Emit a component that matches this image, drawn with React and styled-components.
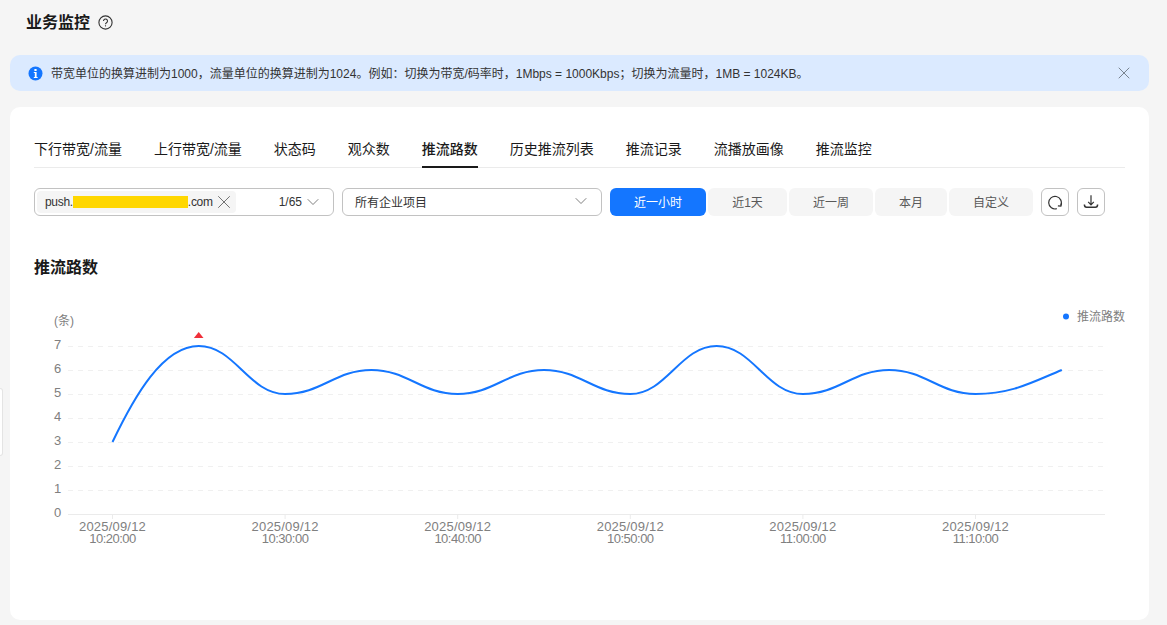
import React from "react";
import styled, { createGlobalStyle } from "styled-components";
import { X, ChevronDown } from "lucide-react";

const GlobalStyle = createGlobalStyle`
  html, body {
    margin: 0;
    padding: 0;
    height: 100%;
    overflow: hidden;
    background: #f5f5f5;
    font-family: "Liberation Sans", "Noto Sans CJK SC", Arial, sans-serif;
    color: #1a1a1a;
  }
  * { box-sizing: border-box; }
`;

const Page = styled.div`
  position: relative;
  height: 625px;
  padding: 0 18px 5px 10px;
  display: flex;
  flex-direction: column;
`;

const Header = styled.div`
  height: 55px;
  padding: 0 0 10px 16px;
  display: flex;
  align-items: center;
  gap: 8px;
`;

const Title = styled.h1`
  margin: 0;
  font-size: 16px;
  line-height: 22px;
  font-weight: 700;
`;

const Alert = styled.div`
  height: 36px;
  flex: none;
  margin-bottom: 16px;
  padding: 0 15px 0 18px;
  display: flex;
  align-items: center;
  gap: 8px;
  background: #dbeaff;
  border-radius: 10px;
  font-size: 12px;
  color: #333;
`;

const AlertText = styled.span`
  flex: 1;
  padding-bottom: 1px;
`;

const CloseButton = styled.span`
  display: flex;
  color: #6f7a85;
`;

const Card = styled.section`
  flex: 1;
  padding: 23px 24px 0;
  background: #fff;
  border-radius: 10px;
`;

const Tabs = styled.nav`
  height: 38px;
  display: flex;
  gap: 32px;
  border-bottom: 1px solid #ebebeb;
`;

const Tab = styled.a`
  height: 38px;
  padding-top: 9px;
  font-size: 14px;
  line-height: 20px;
  font-weight: ${(p) => (p.$active ? 500 : 400)};
  color: #1a1a1a;
  border-bottom: 2px solid ${(p) => (p.$active ? "#1a1a1a" : "transparent")};
`;

const Filters = styled.div`
  margin-top: 20px;
  height: 28px;
  display: flex;
  gap: 8px;
`;

const Select = styled.div`
  width: ${(p) => p.$width}px;
  height: 28px;
  padding: ${(p) => (p.$tagged ? "0 10px 0 2px" : "0 10px 2px 12px")};
  display: flex;
  align-items: center;
  justify-content: space-between;
  border: 1px solid #c2c2c2;
  border-radius: 6px;
  font-size: 12px;
  color: #333;
  svg { color: #666; }
`;

const Tag = styled.span`
  width: 199px;
  height: 22px;
  padding: 0 0 0 8px;
  display: flex;
  align-items: center;
  background: #f5f5f5;
  border-radius: 4px;
  letter-spacing: -0.3px;
`;

const Redacted = styled.span`
  width: 115px;
  height: 12px;
  background: #ffd700;
`;

const TagClose = styled.span`
  display: flex;
`;

const Count = styled.span`
  margin-left: auto;
  margin-right: 1px;
`;

const Ranges = styled.div`
  display: flex;
  gap: 2px;
`;

const Range = styled.button`
  width: ${(p) => p.$width}px;
  height: 28px;
  padding: 0 0 2px;
  border: 0;
  border-radius: 6px;
  font: inherit;
  font-size: 12px;
  color: ${(p) => (p.$active ? "#fff" : "#595959")};
  background: ${(p) => (p.$active ? "#1476ff" : "#f5f5f5")};
`;

const IconButtons = styled.div`
  display: flex;
  gap: 8px;
`;

const IconButton = styled.button`
  width: 28px;
  height: 28px;
  padding: 0;
  display: flex;
  align-items: center;
  justify-content: center;
  background: #fff;
  border: 1px solid #c2c2c2;
  border-radius: 6px;
  color: #333;
`;

const ChartTitle = styled.h2`
  margin: 41px 0 0;
  font-size: 16px;
  line-height: 22px;
  font-weight: 700;
`;

const Chart = styled.svg`
  display: block;
  margin-top: 11px;
  width: 1091px;
  height: 260px;
  text {
    font-family: "Liberation Sans", "Noto Sans CJK SC", Arial, sans-serif;
    fill: #808080;
  }
`;

const SideHandle = styled.div`
  position: absolute;
  left: 0;
  top: 388px;
  width: 3px;
  height: 68px;
  background: #fff;
  border: 1px solid #e4e4e4;
  border-left: 0;
  border-radius: 0 4px 4px 0;
`;

const tabs = [
  "下行带宽/流量",
  "上行带宽/流量",
  "状态码",
  "观众数",
  "推流路数",
  "历史推流列表",
  "推流记录",
  "流播放画像",
  "推流监控",
];

const ranges = [
  { label: "近一小时", width: 96 },
  { label: "近1天", width: 79 },
  { label: "近一周", width: 84 },
  { label: "本月", width: 72 },
  { label: "自定义", width: 84 },
];

const values = [3, 7, 5, 6, 5, 6, 5, 7, 5, 6, 5, 6];
const ticks = ["10:20:00", "10:30:00", "10:40:00", "10:50:00", "11:00:00", "11:10:00"];

const X0 = 112.5;
const STEP = 86.3;
const yOf = (v) => 514 - v * 24;
const xOf = (i) => X0 + i * STEP;

function linePath() {
  let d = `M${X0} ${yOf(values[0])}`;
  for (let i = 1; i < values.length; i++) {
    const x0 = xOf(i - 1);
    const x1 = xOf(i);
    const y0 = yOf(values[i - 1]);
    const y1 = yOf(values[i]);
    const first = i === 1;
    const last = i === values.length - 1;
    const c1x = first ? x0 + STEP * 0.25 : x0 + STEP * 0.42;
    const c1y = first ? y0 - 45 : y0;
    const c2x = last ? x1 - STEP * 0.35 : x1 - STEP * 0.42;
    const c2y = last ? y1 + 12.5 : y1;
    d += ` C${c1x} ${c1y} ${c2x} ${c2y} ${x1} ${y1}`;
  }
  return d;
}

function HelpIcon() {
  return (
    <svg width="15" height="15" viewBox="0 0 15 15" fill="none" stroke="#333" strokeWidth="1.1">
      <circle cx="7.5" cy="7.5" r="6.6" />
      <path d="M5.5 5.9a2 2 0 1 1 3 1.8c-.65.4-1 .75-1 1.5" />
      <path d="M7.5 10.3v1.1" />
    </svg>
  );
}

function InfoIcon() {
  return (
    <svg width="15" height="15" viewBox="0 0 15 15">
      <circle cx="7.5" cy="7.5" r="7" fill="#1476ff" />
      <rect x="6.4" y="3" width="2.2" height="2" fill="#fff" />
      <path d="M5.8 6h2.8v5h1v1H5.8v-1h1V7h-1z" fill="#fff" />
    </svg>
  );
}

function RefreshIcon() {
  return (
    <svg width="16" height="16" viewBox="0 0 16 16" fill="none" stroke="#333" strokeWidth="1.2">
      <path d="M13.7 11.4A6.3 6.3 0 1 0 9.8 14.7" />
      <path d="M10.9 11.8l3 .4.6-3" />
    </svg>
  );
}

function DownloadIcon() {
  return (
    <svg width="16" height="16" viewBox="0 0 16 16" fill="none" stroke="#333" strokeWidth="1.2">
      <path d="M8 1.2v9.4M5.2 7.8L8 10.8l2.8-3" />
      <path d="M1.4 10.4c0 1.9.9 2.8 2.2 2.8h8.8c1.3 0 2.2-.9 2.2-2.8" strokeWidth="1.5" />
    </svg>
  );
}

export default function App() {
  return (
    <Page>
      <GlobalStyle />
      <SideHandle />
      <Header>
        <Title>业务监控</Title>
        <HelpIcon />
      </Header>
      <Alert>
        <InfoIcon />
        <AlertText>
          带宽单位的换算进制为1000，流量单位的换算进制为1024。例如：切换为带宽/码率时，1Mbps = 1000Kbps；切换为流量时，1MB = 1024KB。
        </AlertText>
        <CloseButton>
          <X size={20} strokeWidth={1.1} />
        </CloseButton>
      </Alert>
      <Card>
        <Tabs>
          {tabs.map((t) => (
            <Tab key={t} $active={t === "推流路数"}>
              {t}
            </Tab>
          ))}
        </Tabs>
        <Filters>
          <Select $width={300} $tagged>
            <Tag>
              push.<Redacted />.com
              <TagClose>
                <X size={22} strokeWidth={1} />
              </TagClose>
            </Tag>
            <Count>1/65</Count>
            <ChevronDown size={20} strokeWidth={1} />
          </Select>
          <Select $width={260}>
            所有企业项目
            <ChevronDown size={20} strokeWidth={1} />
          </Select>
          <Ranges>
            {ranges.map((r, i) => (
              <Range key={r.label} $width={r.width} $active={i === 0}>
                {r.label}
              </Range>
            ))}
          </Ranges>
          <IconButtons>
            <IconButton>
              <RefreshIcon />
            </IconButton>
            <IconButton>
              <DownloadIcon />
            </IconButton>
          </IconButtons>
        </Filters>
        <ChartTitle>推流路数</ChartTitle>
        <Chart viewBox="34 290 1091 260">
          <text x="54" y="325" fontSize="12">(条)</text>
          <circle cx="1066" cy="316.5" r="3" fill="#1476ff" />
          <text x="1077" y="321" fontSize="12">推流路数</text>
          {[0, 1, 2, 3, 4, 5, 6, 7].map((v) => (
            <g key={v}>
              <line
                x1="68"
                x2="1105"
                y1={yOf(v) + 0.5}
                y2={yOf(v) + 0.5}
                stroke={v === 0 ? "#ebebeb" : "#f0f0f0"}
                strokeDasharray={v === 0 ? undefined : "5 5"}
              />
              <text x="54" y={yOf(v) + 2.5} fontSize="13">{v}</text>
            </g>
          ))}
          {ticks.map((t, i) => (
            <g key={t} textAnchor="middle">
              <line x1={xOf(i * 2)} x2={xOf(i * 2)} y1="514" y2="519" stroke="#ebebeb" />
              <text x={xOf(i * 2)} y="531" fontSize="13" letterSpacing="0.2">2025/09/12</text>
              <text x={xOf(i * 2)} y="543" fontSize="13" letterSpacing="-0.5">{t}</text>
            </g>
          ))}
          <path d={linePath()} fill="none" stroke="#1476ff" strokeWidth="2" />
          <path d="M198.7 332l4.8 6h-9.6z" fill="#f0303a" />
        </Chart>
      </Card>
    </Page>
  );
}
